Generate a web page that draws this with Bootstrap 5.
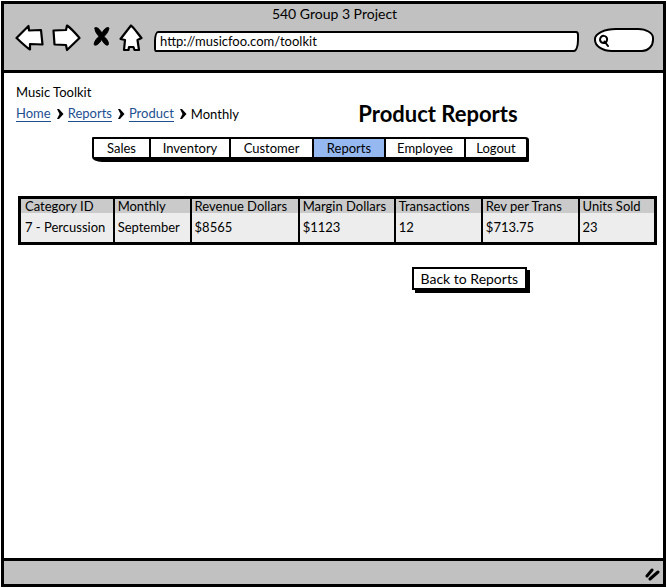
<!DOCTYPE html>
<html lang="en">
<head>
<meta charset="utf-8">
<meta name="viewport" content="width=device-width, initial-scale=1">
<title>540 Group 3 Project</title>
<link href="https://cdn.jsdelivr.net/npm/bootstrap@5.3.0/dist/css/bootstrap.min.css" rel="stylesheet">
<style>
  body { font-family: Lato, "Open Sans", sans-serif; font-size: 13px; line-height: 20px; color: #000; background: #fff; font-variant-ligatures: none; }
  .window-frame { border: 3px solid #000; margin: 1px; min-height: calc(100vh - 2px); }
  .chrome-bar { background: #c1c1c1; border-bottom: 3px solid #000; padding: 0 9px 18px 11px; }
  .window-title { font-size: 14px; line-height: 20px; }
  .tool-btn { background: none; border: 0; padding: 0; line-height: 0; }
  .tool-btn path { stroke: #000; stroke-width: 2.2; stroke-linejoin: round; stroke-linecap: round; fill: #fff; }
  .tool-btn svg, .search-icon, .resize-grip { display: block; }
  .address-box { height: 21px; border: 2px solid #000; border-radius: 4px 3px 5px 2px / 10px 4px 12px 4px; padding: 0 4px 2px; background: #fff; color: #000; margin-left: 11px; margin-right: 15px; min-width: 0; outline-offset: 1px; }
  .search-box { width: 60px; height: 24px; border: 2px solid #000; border-radius: 22px 16px 12px 18px / 11px 10px 12px 12px; background: #fff; padding-left: 1px; }
  .search-box input { width: 36px; height: 16px; border: 0; padding: 0; background: none; outline: 0; }
  .page-body { padding: 9px 6px 20px 12px; }
  .crumbs { line-height: 20px; }
  .crumbs a { color: #1d4f91; text-decoration: none; border-bottom: 1px solid #1d4f91; line-height: 15px; }
  .crumbs li { gap: 6px; margin-right: 4px; }
  .page-title { font-size: 22px; line-height: 24px; font-weight: 700; }
  .title-gap { width: 18%; }
  .section-tabs { margin: 11px 0 0 76px; border: 2px solid #000; border-right-width: 3px; border-bottom-width: 5px; border-radius: 1px 4px 1px 10px / 1px 3px 1px 5px; }
  .section-tabs a { color: #000; text-decoration: none; text-align: center; line-height: 18px; border-right: 2px solid #000; }
  .section-tabs a:last-child { border-right: 0; }
  .section-tabs .current { background: #96b8f1; }
  .tab-s { width: 57px; } .tab-m { width: 72px; } .tab-l { width: 80px; } .tab-xl { width: 83px; } .tab-e { width: 60px; }
  .report-grid { table-layout: fixed; width: 100%; border: 3px solid #000; margin: 34px 0 0; background: #ededed; color: #000; }
  .report-wrap { padding: 0 0 0 2px; }
  .report-grid th, .report-grid td { font-weight: 400; padding: 0 0 0 3px; border-left: 2px solid #000; white-space: nowrap; }
  .report-grid th { background: #cacaca; line-height: 14px; }
  .report-grid td { line-height: 29px; }
  .report-grid th:first-child, .report-grid td:first-child { padding-left: 4px; }
  .w-a { width: 14.8%; } .w-b { width: 12.1%; } .w-c { width: 17%; } .w-d { width: 15.1%; } .w-e { width: 13.7%; } .w-f { width: 15.2%; }
  .back-row { padding: 22px 130px 0 0; }
  .back-btn { background: #fff; color: #000; border: 2px solid #000; padding: 0 7px; font-size: 14px; line-height: 19px; box-shadow: 3px 3px 0 #000; white-space: nowrap; }
  .status-bar { background: #c1c1c1; border-top: 3px solid #000; height: 26px; padding: 0 1px; }
</style>
<script src="https://cdn.jsdelivr.net/npm/bootstrap@5.3.0/dist/js/bootstrap.bundle.min.js"></script>
</head>
<body>
<div class="window-frame d-flex flex-column">
  <header class="chrome-bar">
    <div class="window-title text-center">540 Group 3 Project</div>
    <div class="d-flex align-items-end">
      <button class="tool-btn me-2" type="button" aria-label="Back"><svg width="29" height="28" viewBox="0 0 29 28"><path d="M1.5 14 L13.5 2 L14 6.5 L26 6 L27.5 20.5 L15 20 L15 25.500 C11 23 6 18 1.500 14Z"/></svg></button>
      <button class="tool-btn me-2" type="button" aria-label="Forward"><svg width="29" height="28" viewBox="0 0 29 28"><path d="M1.500 6.500 L14 6 L15 1.500 C20 5 24 10 27.500 14 L15 26 L14 21 L2.500 20.500 Z"/></svg></button>
      <button class="tool-btn mx-1" type="button" aria-label="Stop"><svg width="18" height="28" viewBox="0 0 18 28"><path d="M2 4 C4 2 7 6 9 9 C11 5 14 2.500 16 4 C15.500 8 12.500 11 11 12.500 C14 15 16.500 19 15 21 C12.500 22 10 18 8.500 15.500 C6.500 19.500 3 22.500 1 20.500 C1.500 17 4 14 6 12.500 C4 10 1.500 7 2 4Z" style="fill:#000;stroke-width:1"/></svg></button>
      <button class="tool-btn" type="button" aria-label="Home page"><svg class="ms-1" width="24" height="28" viewBox="0 0 24 28"><path d="M1.500 15 L12 1.500 C16 5 19 10 22.500 14 L18.500 16 L20 26 L15.500 26 L14.500 23 L10 23 L9.500 26 L5 26 L6 16Z"/></svg></button>
      <input class="address-box flex-grow-1" type="text" aria-label="Address" value="http://musicfoo.com/toolkit">
      <label class="search-box d-flex align-items-center">
        <svg class="search-icon" width="14" height="14" viewBox="0 0 14 14" role="img" aria-label="Search"><path d="M3 7 C3 1 11 2 10 7 C9.500 11 4 11 3 7 M7.500 8.500 L11 13" fill="none" stroke="#000" stroke-width="2" stroke-linecap="round"/></svg>
        <input type="search" aria-label="Search terms">
      </label>
    </div>
  </header>

  <main class="page-body flex-grow-1">
    <div>Music Toolkit</div>
    <div class="d-flex align-items-center">
      <nav aria-label="Breadcrumb">
        <ol class="crumbs list-unstyled d-flex mb-0">
          <li class="d-flex align-items-center"><a href="#home">Home</a><svg width="7" height="10" viewBox="0 0 7 10" aria-hidden="true"><path d="M0 0 H2 L6.500 5 L2 10 H0 L2.500 5Z"/></svg></li>
          <li class="d-flex align-items-center"><a href="#reports">Reports</a><svg width="7" height="10" viewBox="0 0 7 10" aria-hidden="true"><path d="M0 0 H2 L6.500 5 L2 10 H0 L2.500 5Z"/></svg></li>
          <li class="d-flex align-items-center"><a href="#product">Product</a><svg width="7" height="10" viewBox="0 0 7 10" aria-hidden="true"><path d="M0 0 H2 L6.500 5 L2 10 H0 L2.500 5Z"/></svg></li>
          <li aria-current="page">Monthly</li>
        </ol>
      </nav>
      <div class="title-gap flex-shrink-1"></div>
      <h1 class="page-title mb-0">Product Reports</h1>
    </div>

    <nav class="section-tabs d-inline-flex" aria-label="Sections">
      <a class="tab-s" href="#sales">Sales</a>
      <a class="tab-l" href="#inventory">Inventory</a>
      <a class="tab-xl" href="#customer">Customer</a>
      <a class="tab-m current" href="#reports" aria-current="page">Reports</a>
      <a class="tab-l" href="#employee">Employee</a>
      <a class="tab-e" href="#logout">Logout</a>
    </nav>

    <div class="report-wrap">
      <table class="report-grid">
        <colgroup><col class="w-a"><col class="w-b"><col class="w-c"><col class="w-d"><col class="w-e"><col class="w-f"><col></colgroup>
        <thead>
          <tr><th scope="col">Category ID</th><th scope="col">Monthly</th><th scope="col">Revenue Dollars</th><th scope="col">Margin Dollars</th><th scope="col">Transactions</th><th scope="col">Rev per Trans</th><th scope="col">Units Sold</th></tr>
        </thead>
        <tbody>
          <tr><td>7 - Percussion</td><td>September</td><td>$8565</td><td>$1123</td><td>12</td><td>$713.75</td><td>23</td></tr>
        </tbody>
      </table>
    </div>

    <div class="back-row d-flex justify-content-end">
      <button class="back-btn" type="button">Back to Reports</button>
    </div>
  </main>

  <footer class="status-bar d-flex justify-content-end align-items-center">
    <svg class="resize-grip" width="18" height="16" viewBox="0 0 18 16" aria-hidden="true"><path d="M3 11 L8 5 M6 14 L14 7" fill="none" stroke="#000" stroke-width="3" stroke-linecap="round"/></svg>
  </footer>
</div>
</body>
</html>
